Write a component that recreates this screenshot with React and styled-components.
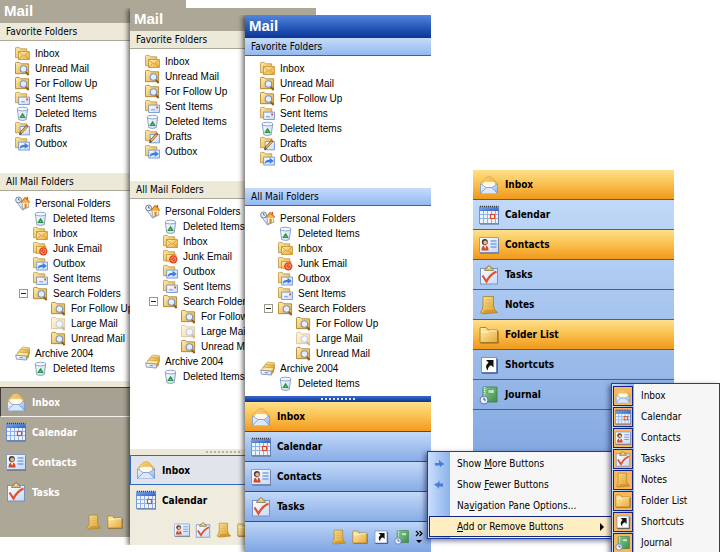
import React, { useState } from 'react';
import styled, { createGlobalStyle, ThemeProvider } from 'styled-components';

const GlobalStyle = createGlobalStyle`
  * { box-sizing: border-box; }
  body {
    margin: 0;
    background: #fff;
    color: #000;
    font-family: "DejaVu Sans Condensed", "DejaVu Sans", sans-serif;
    font-size: 10px;
  }
  ul { list-style: none; margin: 0; padding: 0; }
  button {
    font: inherit;
    color: inherit;
    background: none;
    border: 0;
    padding: 0;
    text-align: left;
    cursor: pointer;
  }
`

/* ---------- themes ---------- */

const orange = 'linear-gradient(#fee08c, #fbc658 40%, #f1981a)';

const classic = {
    title: '#aca797',
    header: '#ece9d8',
    headerLine: '#aca899',
    splitter: '#ece9d8',
    grip: 'transparent',
    nav: '#aca797',
    row: 'transparent',
    rowLine: 'transparent',
    text: '#fff',
    active: '#a7a193',
    activeBorder: '#3b3a36 transparent #f4f2ea #3b3a36',
    tray: 'transparent',
};

const silver = {
    ...classic,
    grip: '#b5b2a4',
    nav: '#efecde',
    text: '#000',
    active: '#e1e4ea',
    activeBorder: '#316ac5',
};

const blue = {
    title: 'linear-gradient(#5486dc, #2a5bbd 50%, #0b3597)',
    header: 'linear-gradient(#c5dbfa, #94b9f0)',
    headerLine: '#2f5fcb',
    splitter: 'linear-gradient(#3a69cc, #0b3597)',
    grip: '#dfe9fb',
    nav: '#8fb2ea',
    row: 'linear-gradient(#c2d9f8, #86abe6)',
    rowLine: '#1f4db4',
    text: '#000',
    active: orange,
    activeBorder: 'transparent transparent #1f4db4',
    tray: 'linear-gradient(#bcd4f7, #7ea5e3)',
};

/* ---------- icons ---------- */

const Svg = styled.svg`
    display: block;
    flex: none;
    width: ${props => props.$size}px;
    height: ${props => props.$size}px;
    opacity: ${props => props.$faded ? 0.45 : 1};
`

const HiddenDefs = styled.svg`
    display: block;
    width: 0;
    height: 0;
    position: absolute;
`

function Gradients() {
    const list = [
        ['gFolder', '#fff0b0', '#eaa93a'],
        ['gFolderBack', '#fce9a6', '#e2b24c'],
        ['gGold', '#ffe79a', '#d99518'],
        ['gBlue', '#ffffff', '#86aeec'],
        ['gSky', '#7fa9ee', '#2e5fc4'],
        ['gPaper', '#ffffff', '#c6d9f7'],
        ['gGreen', '#8fcf95', '#3c8d4b'],
        ['gFlap', '#ffd774', '#f39b1d'],
    ];
    return (
        <HiddenDefs aria-hidden="true">
            <defs>
                {list.map(([id, a, b]) => (
                    <linearGradient key={id} id={id} x1="0" y1="0" x2="1" y2="1">
                        <stop offset="0" stopColor={a} />
                        <stop offset="1" stopColor={b} />
                    </linearGradient>
                ))}
            </defs>
        </HiddenDefs>
    )
}

// 20x20 module icons
const bigShapes = {
    inbox: (
        <>
            <path d="M1.500 8.500 L6 3.500 Q10 -.5 14 3.500 L18.500 8.500 V18 H1.500 Z" fill="url(#gFlap)" stroke="#c9a05a" strokeWidth=".6" />
            <path d="M3.500 9 Q4 6.500 6 6.500 H14 Q16 6.500 16.500 9 V13 H3.500 Z" fill="#fffbe8" stroke="#c9b98c" strokeWidth=".5" />
            <path d="M1.500 9 L7 12.500 H13 L18.500 9 V18.500 H1.500 Z" fill="url(#gBlue)" stroke="#6c92d6" strokeWidth=".7" />
            <path d="M1.500 18.500 L7.500 12.500 H12.500 L18.500 18.500" fill="#dbe8fc" stroke="#6f97da" strokeWidth=".7" />
        </>
    ),
    calendar: (
        <>
            <rect x=".5" y="2" width="19" height="16.500" fill="#eef4fe" stroke="#5b82cb" strokeWidth=".8" />
            <rect x=".5" y="2" width="19" height="4" fill="url(#gSky)" />
            <path d="M1 1.500 H19.500" stroke="#39393c" strokeWidth="1.600" strokeDasharray="1 1" />
            <path d="M1 9.500 H19 M1 13.500 H19 M4.500 6 V18 M8.500 6 V18 M12.500 6 V18 M16.500 6 V18" stroke="#8db1ec" strokeWidth="1" />
            <rect x="11.500" y="9.500" width="4" height="4" fill="#fff" stroke="#e04a24" strokeWidth="1.200" />
            <path d="M1 19.200 H20 V4" fill="none" stroke="#56637f" strokeWidth=".7" />
        </>
    ),
    contacts: (
        <>
            <rect x=".5" y="2.500" width="19" height="15" rx=".5" fill="url(#gPaper)" stroke="#7690bd" strokeWidth=".8" />
            <path d="M1 18.200 H20 V4" fill="none" stroke="#56637f" strokeWidth=".8" />
            <circle cx="5.800" cy="7" r="3" fill="#4a3228" />
            <circle cx="6.200" cy="7.500" r="1.900" fill="#e8b489" />
            <path d="M2.500 15.500 Q2.500 10.500 6 10.500 Q9.500 10.500 9.500 15.500 Z" fill="#cf4a20" />
            <path d="M5 10.800 H7.200 L6.200 14 Z" fill="#fff" />
            <path d="M11.500 6 H17.500 M11.500 9 H17.500 M11.500 12 H17.500" stroke="#7ba3e6" strokeWidth="1.300" />
        </>
    ),
    tasks: (
        <>
            <rect x="1.500" y="3.500" width="17" height="15.500" fill="url(#gPaper)" stroke="#6f8dc4" strokeWidth=".9" />
            <path d="M5.500 5.500 L6.500 3 H8 Q8.500 .8 10 .8 T12 3 H13.500 L14.500 5.500 Z" fill="#d9bf78" stroke="#7e6c3b" strokeWidth=".7" />
            <circle cx="10" cy="2.700" r=".8" fill="#fff" />
            <path d="M3.500 10.500 L7.500 16.500 Q11 9.500 17.500 6.500" fill="none" stroke="#e4502c" strokeWidth="2.200" />
        </>
    ),
    notes: (
        <>
            <path d="M4 1.500 H14.500 V11 Q15 15.500 18.500 17.500 L5 18.800 Q1.500 18.800 1.500 17 Q4 15 4 10 Z" fill="url(#gGold)" stroke="#a0731c" strokeWidth=".7" />
            <path d="M5.500 15 H15 Q16.500 16.800 18.500 17.500 L5 18.800 Q2.500 18.800 2 17.500 Q4.500 18 5.500 15 Z" fill="#c98c24" opacity=".6" />
            <path d="M6 5 H12.500 M6 8 H12.500 M6 11 H12.500" stroke="#dcae4d" strokeWidth=".7" />
        </>
    ),
    folder: (
        <>
            <path d="M1 5 V3.500 Q1 2.500 2 2.500 H7 L9 5 H18.500 V17.500 H1 Z" fill="url(#gFolder)" stroke="#a77b24" strokeWidth=".9" />
            <path d="M2 7 H9 L10.500 5.800 H18" fill="none" stroke="#fff6cf" strokeWidth="1" />
            <path d="M1.500 18.200 H19.300 V6" fill="none" stroke="#806325" strokeWidth=".7" />
        </>
    ),
    shortcuts: (
        <>
            <rect x="2.500" y="2.500" width="15" height="15" fill="#fff" stroke="#6f8dc4" strokeWidth=".9" />
            <path d="M3 18.200 H18.300 V4" fill="none" stroke="#35415c" strokeWidth=".9" />
            <path d="M7 5 H14.500 V12.500 L12.200 10.200 Q8.500 11.500 9 15.500 Q5 11.500 9.500 7.500 Z" fill="#111" />
        </>
    ),
    journal: (
        <>
            <path d="M4 2 H18 V17 H4 Z" fill="url(#gGreen)" stroke="#3b7a46" strokeWidth=".8" />
            <rect x="9" y="4.500" width="6.500" height="4" fill="#b9e4bb" stroke="#3f8a4c" strokeWidth=".6" />
            <path d="M5.500 2 V17" stroke="#e3eee3" strokeWidth="1.600" strokeDasharray="1 1" />
            <circle cx="5" cy="15" r="4" fill="#e6effd" stroke="#5c79ad" strokeWidth="1" />
            <path d="M5 12.500 V15 H7" fill="none" stroke="#2c4170" strokeWidth=".9" />
        </>
    ),
};

const folderBack = (
    <path d="M.5 2.500 Q.5 1.500 1.500 1.500 H4.500 L6 3 H12.500 V12.500 H.5 Z" fill="url(#gFolderBack)" stroke="#b98e3a" strokeWidth=".8" />
);

const magnifier = (
    <>
        <path d="M.5 2.500 Q.5 1.500 1.500 1.500 H4.500 L6 3 H14.500 V13.500 H.5 Z" fill="url(#gFolder)" stroke="#a77b24" strokeWidth=".9" />
        <path d="M11.500 11.500 L14.500 15" stroke="#8b5a1c" strokeWidth="2" />
        <circle cx="9" cy="8.500" r="3.500" fill="#e4effe" stroke="#7d92b8" strokeWidth="1.200" />
    </>
);

// 16x16 folder icons
const smallShapes = {
    inbox: (
        <>
            {folderBack}
            <rect x="3.800" y="6" width="11.500" height="8.500" fill="url(#gFolder)" stroke="#c48a26" strokeWidth=".8" />
            <path d="M4 6.300 L9.500 11 L15 6.300 M4 14.300 L8 10 M15 14.300 L11 10" fill="none" stroke="#d2922a" strokeWidth=".8" />
        </>
    ),
    search: magnifier,
    sent: (
        <>
            {folderBack}
            <rect x="4" y="6.500" width="11.500" height="8" fill="url(#gPaper)" stroke="#5f87cc" strokeWidth=".8" />
            <rect x="12" y="8" width="2" height="2" fill="#e04a24" />
            <path d="M6.500 11.500 H10.500" stroke="#6d90cd" strokeWidth="1" />
        </>
    ),
    deleted: (
        <>
            <path d="M2.500 3.500 L4 14.500 Q8 16.500 12 14.500 L13.500 3.500 Z" fill="url(#gPaper)" stroke="#7a93bd" strokeWidth=".9" />
            <ellipse cx="8" cy="3.300" rx="5.800" ry="2" fill="#f5f9ff" stroke="#7a93bd" strokeWidth=".9" />
            <path d="M8 8.500 L10.200 12 H5.800 Z" fill="none" stroke="#2c9b3f" strokeWidth="1.500" />
        </>
    ),
    drafts: (
        <>
            {folderBack}
            <rect x="5.500" y="6" width="10" height="8.800" fill="url(#gPaper)" stroke="#5f87cc" strokeWidth=".8" />
            <path d="M5.800 13.200 L13.200 5" stroke="#7b5420" strokeWidth="2.800" />
            <path d="M6.500 12.500 L13 5.300" stroke="#f7bd4c" strokeWidth="1.500" />
            <path d="M12.300 5.900 L13.500 4.600" stroke="#d8482e" strokeWidth="2.800" />
            <path d="M4.500 15 L5 12.600 L6.700 14.200 Z" fill="#2e2417" />
        </>
    ),
    outbox: (
        <>
            {folderBack}
            <rect x="4" y="6.500" width="11.500" height="8.500" fill="url(#gPaper)" stroke="#5f87cc" strokeWidth=".8" />
            <path d="M5 13.800 Q5 9.300 10.300 9.300 V7.200 L14.800 10.600 L10.300 13.600 V11.700 Q7 11.600 5 13.800 Z" fill="#3f7be0" />
        </>
    ),
    junk: (
        <>
            {folderBack}
            <rect x="3.800" y="6" width="10" height="7" fill="url(#gFolder)" stroke="#c48a26" strokeWidth=".8" />
            <circle cx="11" cy="11" r="4.400" fill="#e63e1c" />
            <circle cx="11" cy="11" r="2.600" fill="none" stroke="#ffb8a4" strokeWidth=".7" />
            <path d="M9.200 12.800 L12.800 9.200" stroke="#ffb8a4" strokeWidth=".9" />
        </>
    ),
    personal: (
        <>
            <path d="M1.500 6 L8 15 L15 11.500 L11 6 Z" fill="url(#gBlue)" stroke="#6482b8" strokeWidth=".7" />
            <path d="M7.500 6.500 H14.500 V12 L8.500 13.500 Z" fill="#fff4d4" stroke="#b1883e" strokeWidth=".6" />
            <path d="M6 7 L10.800 1.800 L15.800 6.800" fill="#f6b23e" stroke="#d07a1c" strokeWidth="1.300" />
            <rect x="10.200" y="8.200" width="2.200" height="4.500" fill="#c9803a" />
            <path d="M13.200 1 V4" stroke="#d8482e" strokeWidth="1.600" />
            <circle cx="3.800" cy="4.200" r="3.100" fill="#eaf2fe" stroke="#64789c" strokeWidth="1" />
            <path d="M3.800 2.300 V4.300 H5.300" fill="none" stroke="#33466b" strokeWidth=".8" />
        </>
    ),
    archive: (
        <>
            <path d="M4.500 5 L8 1 L15.500 2 V8 L12 9 Z" fill="url(#gFolder)" stroke="#b98a30" strokeWidth=".6" />
            <path d="M2.500 7.500 L6 3.500 L15 4.500 V9 L12 10 Z" fill="url(#gGold)" stroke="#b98a30" strokeWidth=".6" />
            <path d="M.8 10 L4 6.500 L15 7.500 L12.500 11 Z" fill="#ffe9a0" stroke="#b98a30" strokeWidth=".6" />
            <path d="M.8 9.800 L12.300 10.800 V15 L1.500 14 Z" fill="url(#gPaper)" stroke="#6c87b8" strokeWidth=".8" />
            <path d="M12.300 10.800 L15 7.500 V11.500 L12.300 15 Z" fill="#c4943c" />
            <path d="M5 12.300 L8.500 12.600" stroke="#6c87b8" strokeWidth="1" />
        </>
    ),
};

function ModuleIcon({ name, size = 20 }) {
    return <Svg $size={size} viewBox="0 0 20 20" aria-hidden="true">{bigShapes[name]}</Svg>
}

function FolderIcon({ name, faded }) {
    return <Svg $size={15} $faded={faded} viewBox="0 0 16 16" aria-hidden="true">{smallShapes[name]}</Svg>
}

/* ---------- data ---------- */

const favorites = [
    ['Inbox', 'inbox'],
    ['Unread Mail', 'search'],
    ['For Follow Up', 'search'],
    ['Sent Items', 'sent'],
    ['Deleted Items', 'deleted'],
    ['Drafts', 'drafts'],
    ['Outbox', 'outbox'],
];

const tree = [
    { label: 'Personal Folders', icon: 'personal', level: 0 },
    { label: 'Deleted Items', icon: 'deleted', level: 1 },
    { label: 'Inbox', icon: 'inbox', level: 1 },
    { label: 'Junk Email', icon: 'junk', level: 1 },
    { label: 'Outbox', icon: 'outbox', level: 1 },
    { label: 'Sent Items', icon: 'sent', level: 1 },
    { label: 'Search Folders', icon: 'search', level: 1, toggle: true },
    { label: 'For Follow Up', icon: 'search', level: 2 },
    { label: 'Large Mail', icon: 'search', level: 2, faded: true },
    { label: 'Unread Mail', icon: 'search', level: 2 },
    { label: 'Archive 2004', icon: 'archive', level: 0 },
    { label: 'Deleted Items', icon: 'deleted', level: 1 },
];

const modules = [
    ['Inbox', 'inbox'],
    ['Calendar', 'calendar'],
    ['Contacts', 'contacts'],
    ['Tasks', 'tasks'],
    ['Notes', 'notes'],
    ['Folder List', 'folder'],
    ['Shortcuts', 'shortcuts'],
    ['Journal', 'journal'],
];

/* ---------- navigation pane ---------- */

function Pane({ theme, x, y, rows, space, chevron }) {
    const [open, setOpen] = useState(true);
    const [active, setActive] = useState('Inbox');
    const folders = open ? tree : tree.filter(f => f.level < 2);
    return (
        <ThemeProvider theme={theme}>
            <Window $x={x} $y={y}>
                <Title>Mail</Title>
                <Header>Favorite Folders</Header>
                <Favorites>
                    {favorites.map(([label, icon]) => (
                        <FolderRow key={label} $indent={15}>
                            <FolderButton><FolderIcon name={icon} />{label}</FolderButton>
                        </FolderRow>
                    ))}
                </Favorites>
                <Header>All Mail Folders</Header>
                <Tree $space={space}>
                    {folders.map((f, index) => (
                        <FolderRow key={index} $indent={f.toggle ? 19 : 15 + f.level * 18}>
                            {f.toggle && (
                                <Toggle aria-label="Search Folders" aria-expanded={open} onClick={() => setOpen(!open)}>
                                    <svg width="7" height="7" viewBox="0 0 7 7">
                                        <path d={open ? 'M1 3.500 H6' : 'M1 3.500 H6 M3.500 1 V6'} stroke="#222" />
                                    </svg>
                                </Toggle>
                            )}
                            <FolderButton><FolderIcon name={f.icon} faded={f.faded} />{f.label}</FolderButton>
                        </FolderRow>
                    ))}
                </Tree>
                <Splitter><Grip /></Splitter>
                <Nav>
                    {modules.slice(0, rows).map(([label, icon]) => (
                        <NavButton key={label} $active={label === active} onClick={() => setActive(label)}>
                            <ModuleIcon name={icon} />{label}
                        </NavButton>
                    ))}
                    <Tray>
                        {modules.slice(rows).map(([label, icon]) => (
                            <button key={label} aria-label={label}><ModuleIcon name={icon} size={16} /></button>
                        ))}
                        {chevron
                            ? (
                                <Chevron aria-label="Configure buttons">
                                    <svg width="8" height="14" viewBox="0 0 8 14">
                                        <path d="M1 1 L3.500 3.500 L1 6 M4.500 1 L7 3.500 L4.500 6" fill="none" stroke="#000" strokeWidth="1.200" />
                                        <path d="M1 10 H7 L4 13 Z" fill="#000" />
                                    </svg>
                                </Chevron>
                            )
                            : <Chevron as="span" />}
                    </Tray>
                </Nav>
            </Window>
        </ThemeProvider>
    )
}

const moreItems = [
    ['Show ', 'M', 'ore Buttons', 'up'],
    ['Show ', 'F', 'ewer Buttons', 'down'],
    ['Na', 'v', 'igation Pane Options...'],
];

function App() {
    return (
        <Desktop>
            <GlobalStyle />
            <Gradients />
            <Pane theme={classic} x={0} y={0} rows={4} space={5} />
            <Pane theme={silver} x={130} y={8} rows={2} space={65} />
            <Pane theme={blue} x={245} y={15} rows={4} space={5} chevron />

            <ButtonStack>
                {modules.map(([label, icon]) => (
                    <StackButton key={label} $active={['Inbox', 'Contacts', 'Folder List'].includes(label)}>
                        <ModuleIcon name={icon} />{label}
                    </StackButton>
                ))}
            </ButtonStack>

            <OptionsMenu role="menu">
                {moreItems.map(([before, key, after, arrow]) => (
                    <MenuItem key={key} role="menuitem">
                        <MenuIcon>
                            {arrow && (
                                <svg width="11" height="10" viewBox="0 0 11 10">
                                    {arrow === 'up'
                                        ? <path d="M5 .5 Q6.500 3.500 10.500 5 Q7 6 6 8.500 V6.500 H1 V4 H5 Z" fill="#4a7bd6" />
                                        : <path d="M5.500 .5 Q4 3.500 0 4.500 Q3.500 6.500 5 9 V6.500 H9 V3.500 H5.500 Z" fill="#4a7bd6" />}
                                </svg>
                            )}
                        </MenuIcon>
                        <span>{before}<u>{key}</u>{after}</span>
                    </MenuItem>
                ))}
                <MenuItem role="menuitem" aria-haspopup="true" $hot>
                    <MenuIcon />
                    <span><u>A</u>dd or Remove Buttons</span>
                    <SubArrow width="4" height="8" viewBox="0 0 4 8"><path d="M0 0 L4 4 L0 8 Z" /></SubArrow>
                </MenuItem>
            </OptionsMenu>

            <ModulesMenu role="menu">
                {modules.map(([label, icon]) => (
                    <MenuItem key={label} role="menuitemcheckbox" aria-checked="true">
                        <CheckedIcon><ModuleIcon name={icon} size={16} /></CheckedIcon>
                        <span>{label}</span>
                    </MenuItem>
                ))}
            </ModulesMenu>
        </Desktop>
    )
}

export default App;


const Desktop = styled.main`
    position: relative;
    height: 100vh;
    overflow: hidden;
`

const Window = styled.section`
    position: absolute;
    left: ${props => props.$x}px;
    top: ${props => props.$y}px;
    width: 186px;
    background: #fff;
    box-shadow: -2px 1px 5px rgba(0, 0, 0, .6);
    clip-path: inset(0 0 0 -8px);
`

const Title = styled.h1`
    margin: 0;
    padding: 0 4px;
    font: bold 15px/22px "Liberation Sans", Arial, sans-serif;
    height: 23px;
    color: #fff;
    background: ${props => props.theme.title};
`

const Header = styled.h2`
    margin: 0;
    padding: 0 6px;
    height: 18px;
    font-size: 10px;
    font-weight: 400;
    line-height: 17px;
    background: ${props => props.theme.header};
    border-bottom: 1px solid ${props => props.theme.headerLine};
`

const Favorites = styled.ul`
    padding: 5px 0 22px;
`

const Tree = styled.ul`
    padding: 5px 0 ${props => props.$space}px;
`

const FolderRow = styled.li`
    display: flex;
    align-items: center;
    gap: 5px;
    height: 15px;
    padding-left: ${props => props.$indent}px;
`

const FolderButton = styled.button`
    display: flex;
    align-items: center;
    gap: 5px;
    height: 15px;
    font-family: "Liberation Sans", Arial, sans-serif;
    white-space: nowrap;
`

const Toggle = styled.button`
    flex: none;
    width: 9px;
    height: 9px;
    border: 1px solid #9c9a8c;
    background: #fff;

    svg {
        display: block;
    }
`

const Splitter = styled.div`
    display: flex;
    align-items: center;
    justify-content: center;
    height: 6px;
    background: ${props => props.theme.splitter};
`

const Grip = styled.span`
    width: 34px;
    height: 2px;
    background: repeating-linear-gradient(90deg, ${props => props.theme.grip} 0 2px, transparent 2px 4px);
`

const Nav = styled.nav`
    display: flex;
    flex-direction: column;
    background: ${props => props.theme.nav};
`

const flat = props => props.theme.row === 'transparent';

const NavButton = styled.button`
    display: flex;
    align-items: center;
    gap: 6px;
    height: 30px;
    padding: 0 6px 0 ${props => flat(props) ? 5 : 6}px;
    font-weight: 700;
    color: ${props => props.theme.text};
    background: ${props => props.$active ? props.theme.active : props.theme.row};
    background-origin: border-box;
    border: solid;
    border-width: ${props => flat(props) ? '1px 0 1px 1px' : '0 0 1px'};
    border-color: ${props => props.$active ? props.theme.activeBorder : props.theme.rowLine};
`

const Tray = styled.div`
    display: flex;
    align-items: center;
    justify-content: flex-end;
    gap: 5px;
    height: 30px;
    padding-right: 7px;
    background: ${props => props.theme.tray};
`

const Chevron = styled.button`
    width: 9px;
    height: 14px;

    svg {
        display: block;
    }
`

const ButtonStack = styled.nav`
    position: absolute;
    left: 473px;
    top: 170px;
    width: 201px;
    display: flex;
    flex-direction: column;
    padding-bottom: 42px;
    background: linear-gradient(#c8dffb, #84a9e1);
`

const StackButton = styled.button`
    display: flex;
    align-items: center;
    gap: 6px;
    height: 30px;
    padding: 0 6px;
    font-weight: 700;
    border-bottom: 1px solid #3260bd;
    background: ${props => props.$active ? orange : 'none'};
`

const Menu = styled.div`
    position: absolute;
    display: flex;
    flex-direction: column;
    padding: 1px;
    border: 1px solid #1a3fa0;
    background: linear-gradient(90deg, #c9defb, #8db2ec 22px, #f6f6f6 22px);
    box-shadow: -2px 2px 5px rgba(0, 0, 60, .5);
`

const OptionsMenu = styled(Menu)`
    left: 427px;
    top: 451px;
    width: 187px;
`

const ModulesMenu = styled(Menu)`
    left: 611px;
    top: 383px;
    right: 0;
`

const MenuItem = styled.button`
    display: flex;
    align-items: center;
    gap: 8px;
    height: 21px;
    white-space: nowrap;
    background: ${props => props.$hot ? '#ffeec2' : 'none'};
    outline: ${props => props.$hot ? '1px solid #10248a' : 'none'};
    outline-offset: -1px;
`

const MenuIcon = styled.span`
    display: flex;
    justify-content: center;
    flex: none;
    width: 20px;
`

const CheckedIcon = styled.span`
    display: flex;
    align-items: center;
    justify-content: center;
    flex: none;
    width: 20px;
    height: 20px;
    border: 1px solid #10248a;
    background: #fbb75c;
`

const SubArrow = styled.svg`
    margin-left: auto;
    margin-right: 8px;
`
